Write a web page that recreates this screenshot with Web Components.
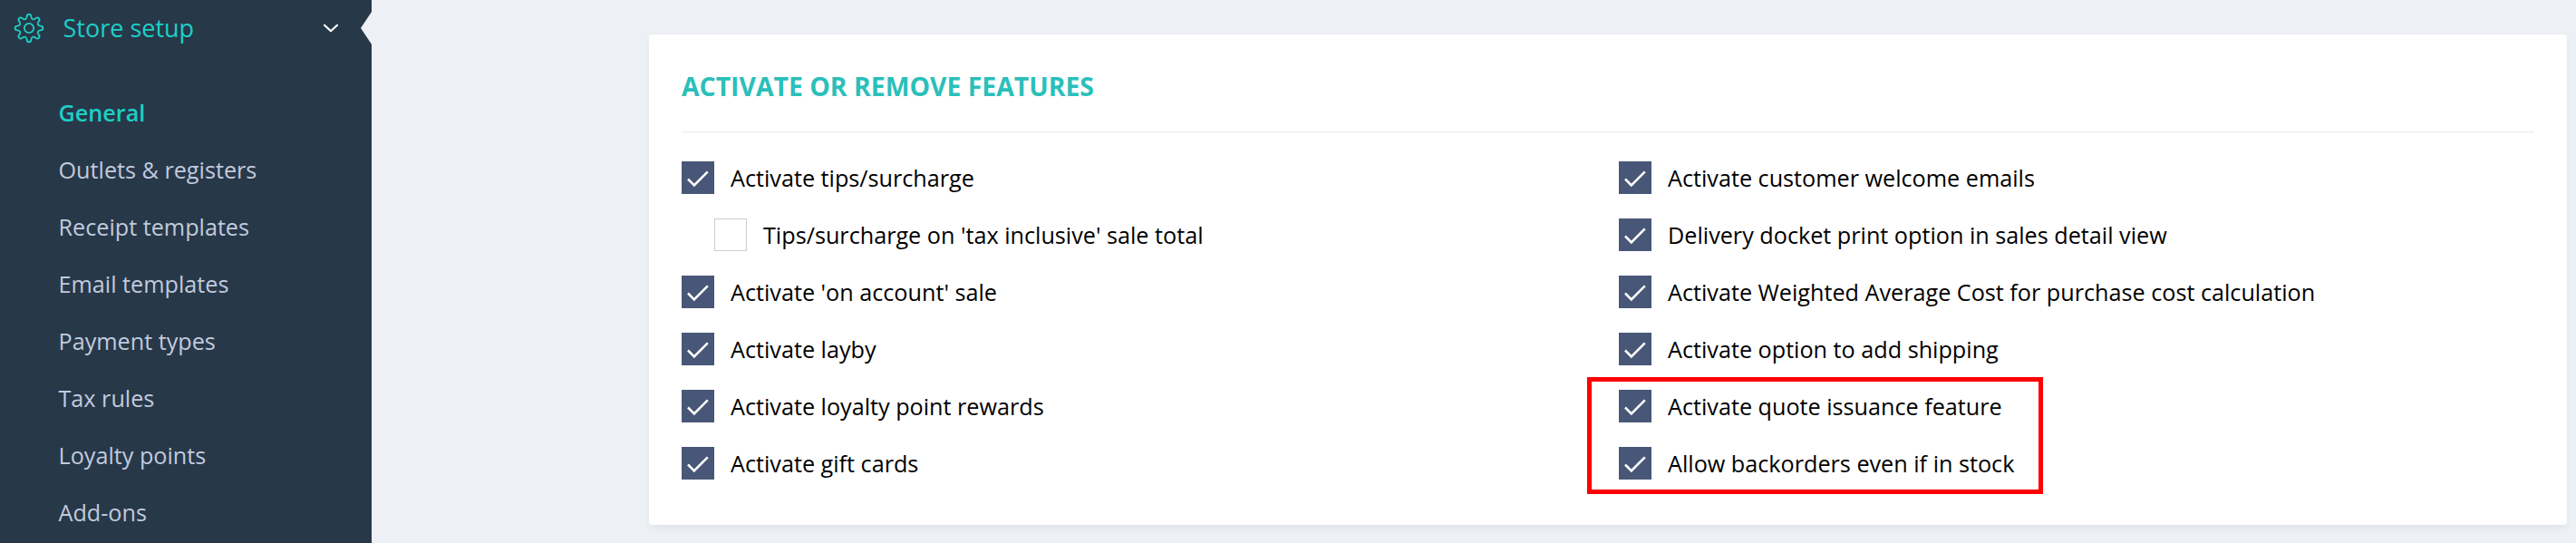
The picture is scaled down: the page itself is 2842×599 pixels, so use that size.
<!DOCTYPE html>
<html lang="en">
<head>
<meta charset="utf-8">
<title>Store setup</title>
<style>
body {
  margin: 0;
  display: flex;
  height: 599px;
  overflow: hidden;
  background: #edf0f5;
  font-family: "Open Sans", "Noto Sans", sans-serif;
  font-size: 25.2px;
  color: #000;
}

main {
  flex: 1;
  padding: 38px 10px 0 306px;
}
</style>
</head>
<body>
<side-menu label="Store setup">
  <menu-entry active>General</menu-entry>
  <menu-entry>Outlets &amp; registers</menu-entry>
  <menu-entry>Receipt templates</menu-entry>
  <menu-entry>Email templates</menu-entry>
  <menu-entry>Payment types</menu-entry>
  <menu-entry>Tax rules</menu-entry>
  <menu-entry>Loyalty points</menu-entry>
  <menu-entry>Add-ons</menu-entry>
</side-menu>
<main>
  <feature-card heading="ACTIVATE OR REMOVE FEATURES">
    <check-option slot="left" checked>Activate tips/surcharge</check-option>
    <check-option slot="left" nested>Tips/surcharge on 'tax inclusive' sale total</check-option>
    <check-option slot="left" checked>Activate 'on account' sale</check-option>
    <check-option slot="left" checked>Activate layby</check-option>
    <check-option slot="left" checked>Activate loyalty point rewards</check-option>
    <check-option slot="left" checked>Activate gift cards</check-option>
    <check-option slot="right" checked>Activate customer welcome emails</check-option>
    <check-option slot="right" checked>Delivery docket print option in sales detail view</check-option>
    <check-option slot="right" checked>Activate Weighted Average Cost for purchase cost calculation</check-option>
    <check-option slot="right" checked>Activate option to add shipping</check-option>
    <highlight-box slot="right">
      <check-option checked>Activate quote issuance feature</check-option>
      <check-option checked>Allow backorders even if in stock</check-option>
    </highlight-box>
  </feature-card>
</main>

<script>
class SideMenu extends HTMLElement {
  constructor() {
    super();
    const shadowRoot = this.attachShadow({ mode: "open" });

    const template = document.createElement("template");
    template.innerHTML = `
<style>
:host {
  display: block;
  width: 410px;
  flex: none;
  background: #273849;
}

.head {
  display: flex;
  align-items: center;
  position: relative;
  height: 62px;
  padding: 0 36px 0 14px;
  margin-bottom: 30px;
  font-size: 27px;
  color: #1dcfc5;
}

.label {
  flex: 1;
  margin-left: 19.5px;
  padding-bottom: 2px;
}

/* notch on the right edge of the open section */
.head::after {
  content: "";
  position: absolute;
  right: 0;
  top: 13px;
  width: 12px;
  height: 36px;
  background: #edf0f5;
  clip-path: polygon(0 50%, 100% 0, 100% 100%);
}

svg {
  display: block;
  flex: none;
}
</style>
<div class="head">
  <svg class="gear" width="36" height="36" viewBox="-18 -18 36 36" fill="none" stroke="currentColor" stroke-width="1.8" stroke-linejoin="round">
    <circle r="5.2"/>
    <path/>
  </svg>
  <span class="label"></span>
  <svg width="18" height="12" viewBox="0 0 18 12" fill="none" stroke="#fff" stroke-width="2.2" stroke-linecap="round" stroke-linejoin="round">
    <path d="M2 2.8 9 9.3 16 2.8"/>
  </svg>
</div>
<slot></slot>`;

    shadowRoot.appendChild(template.content.cloneNode(true));
    this.label = shadowRoot.querySelector(".label");
    this.gear = shadowRoot.querySelector(".gear path");
  }

  // eight rounded teeth, one every 45 degrees
  #gearPath() {
    const point = (x, y, i) => {
      const a = (i * Math.PI) / 4;
      const px = x * Math.cos(a) - y * Math.sin(a);
      const py = x * Math.sin(a) + y * Math.cos(a);
      return `${px.toFixed(2)} ${py.toFixed(2)}`;
    };
    let d = `M${point(-2.4, -12.6, 0)}`;
    for (let i = 0; i < 8; i++) {
      d += `C${point(-2.2, -16.4, i)} ${point(2.2, -16.4, i)} ${point(2.4, -12.6, i)}`;
      d += `C${point(2.8, -9.6, i)} ${point(-2.8, -9.6, i + 1)} ${point(-2.4, -12.6, i + 1)}`;
    }
    return d + "Z";
  }

  connectedCallback() {
    this.label.textContent = this.getAttribute("label");
    this.gear.setAttribute("d", this.#gearPath());
  }
}

class MenuEntry extends HTMLElement {
  constructor() {
    super();
    const shadowRoot = this.attachShadow({ mode: "open" });
    shadowRoot.innerHTML = `
<style>
:host {
  display: flex;
  align-items: center;
  height: 63px;
  padding-left: 64.5px;
  color: #c1cadd;
}

:host([active]) {
  color: #1dcfc5;
  font-weight: 600;
}
</style>
<span><slot></slot></span>`;
  }
}

class FeatureCard extends HTMLElement {
  constructor() {
    super();
    const shadowRoot = this.attachShadow({ mode: "open" });
    shadowRoot.innerHTML = `
<style>
:host {
  display: block;
  box-sizing: border-box;
  height: 541px;
  padding: 0 36px;
  border-radius: 4px;
  background: #fff;
  box-shadow: 0 4px 8px rgba(0, 0, 0, 0.05);
}

h2 {
  display: flex;
  align-items: center;
  box-sizing: border-box;
  height: 108px;
  margin: 0;
  padding-top: 6px;
  border-bottom: 1px solid #ebebeb;
  font-size: 28.4px;
  font-weight: 700;
  color: #2bbfba;
}

.columns {
  display: grid;
  grid-template-columns: 1034px 1fr;
  padding-top: 18px;
}
</style>
<h2></h2>
<div class="columns">
  <div><slot name="left"></slot></div>
  <div><slot name="right"></slot></div>
</div>`;
    this.heading = shadowRoot.querySelector("h2");
  }

  connectedCallback() {
    this.heading.textContent = this.getAttribute("heading");
  }
}

class CheckOption extends HTMLElement {
  constructor() {
    super();
    const shadowRoot = this.attachShadow({ mode: "open" });
    shadowRoot.innerHTML = `
<style>
:host {
  display: flex;
  align-items: flex-start;
  box-sizing: border-box;
  gap: 18px;
  height: 63px;
  padding-top: 14px;
  line-height: 36px;
  white-space: nowrap;
}

:host([nested]) {
  padding-left: 36px;
}

.box {
  box-sizing: border-box;
  width: 36px;
  height: 36px;
  border: 1px solid #d0cdc6;
}

:host([checked]) .box {
  border: 0;
  background: #485778;
}

svg {
  display: none;
}

:host([checked]) svg {
  display: block;
}
</style>
<div class="box">
  <svg width="36" height="36" fill="none" stroke="#fff" stroke-width="2.6">
    <path d="M7 19.5 13.8 26.3 28.8 11.3"/>
  </svg>
</div>
<span><slot></slot></span>`;
  }
}

class HighlightBox extends HTMLElement {
  constructor() {
    super();
    const shadowRoot = this.attachShadow({ mode: "open" });
    shadowRoot.innerHTML = `
<style>
:host {
  display: block;
  position: relative;
}

/* frame lies over the rows, so it takes no room */
.frame {
  position: absolute;
  left: -35px;
  top: 0;
  width: 503px;
  height: 129px;
  box-sizing: border-box;
  border: 5px solid #f00;
}
</style>
<slot></slot>
<div class="frame"></div>`;
  }
}

window.customElements.define("side-menu", SideMenu);
window.customElements.define("menu-entry", MenuEntry);
window.customElements.define("feature-card", FeatureCard);
window.customElements.define("check-option", CheckOption);
window.customElements.define("highlight-box", HighlightBox);
</script>
</body>
</html>
